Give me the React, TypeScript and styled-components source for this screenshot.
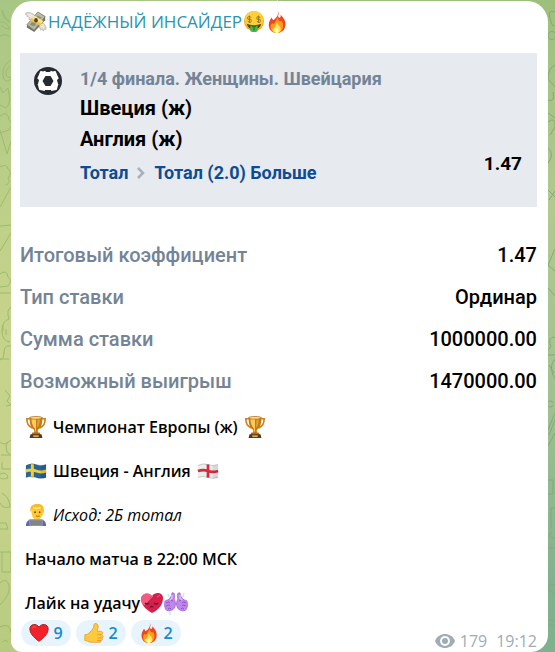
import React from "react";
import styled, { createGlobalStyle } from "styled-components";

const GlobalStyle = createGlobalStyle`
  *, *::before, *::after { box-sizing: border-box; }
  body { margin: 0; font-family: "Open Sans", "Noto Sans", sans-serif; font-size: 16px; line-height: 22px; color: #000; }
  p, h1, h2, dl, dd, dt { margin: 0; }
`;

const Wallpaper = styled.div`
  display: grid;
  grid-template-columns: 11px minmax(0, 1fr) 7px;
  min-height: 100vh;
  background:
    linear-gradient(#a7c684, #b5cc86 18%, #c5d38a 45%, #c8d38c 75%, #b6cb7f) left / 50% 100% no-repeat,
    linear-gradient(#9cc07b, #b2c98f 32%, #a0c290 60%, #80b18f 90%) right / 50% 100% no-repeat;
`;

const Gutter = styled.div`
  overflow: hidden;
  svg { display: block; fill: none; stroke-width: 1; }
`;

const Bubble = styled.article`
  margin-top: 1px;
  padding: 10px 11px 0 9px;
  background: #fff;
  border-radius: 21px 21px 17px 11px;
`;

const Header = styled.header`
  display: flex;
  align-items: center;
  gap: 1px;
  padding-left: 5px;
`;

const ChannelLink = styled.a`
  display: flex;
  align-items: center;
  gap: 1px;
  color: #2a94b2;
  font-size: 17px;
  text-decoration: none;
`;

const BetCard = styled.section`
  display: flex;
  gap: 18px;
  margin-top: 20px;
  padding: 14px 15px 22px 14px;
  background: #e7eaef;
  font-family: Roboto, sans-serif;
  font-size: 18px;
  font-weight: 700;
  svg { flex: none; }
`;

const BetInfo = styled.div`
  flex: 1;
  min-width: 0;
`;

const Tournament = styled.p`
  margin-bottom: 2px;
  line-height: 24px;
  color: #748496;
`;

const Team = styled.h2`
  font-size: 20px;
  line-height: 31px;
`;

const Market = styled.p`
  display: flex;
  align-items: center;
  gap: 9px;
  margin-top: 6px;
  line-height: 24px;
  color: #0d4c95;
`;

const Odds = styled.strong`
  align-self: flex-end;
  margin-bottom: 9px;
  font-size: 19px;
  font-weight: 700;
  line-height: 24px;
`;

const Summary = styled.dl`
  margin-top: 27px;
  font-family: Roboto, sans-serif;
  font-size: 20px;
  font-weight: 500;
`;

const SummaryRow = styled.div`
  display: flex;
  justify-content: space-between;
  line-height: 42px;
  dt { color: #748496; }
`;

const Message = styled.div`
  display: grid;
  gap: 22px;
  margin-top: 14px;
  padding-left: 5px;
`;

const Line = styled.p<{ $italic?: boolean; $gap?: number }>`
  display: flex;
  align-items: center;
  gap: ${(p) => p.$gap ?? 6}px;
  height: 22px;
  font-weight: ${(p) => (p.$italic ? 400 : 600)};
  font-style: ${(p) => (p.$italic ? "italic" : "normal")};
`;

const Footer = styled.footer`
  display: flex;
  justify-content: space-between;
  align-items: flex-start;
  margin-top: 6px;
  padding-left: 1px;
`;

const Reactions = styled.div`
  display: flex;
  gap: 5px;
`;

const Reaction = styled.button`
  display: flex;
  align-items: center;
  justify-content: center;
  gap: 4px;
  width: 50px;
  height: 26px;
  padding: 0;
  border: 0;
  border-radius: 13px;
  background: #e8f4fc;
  color: #168acd;
  font: 600 16px/22px "Open Sans", "Noto Sans", sans-serif;
  cursor: pointer;
`;

const Meta = styled.div`
  display: flex;
  align-items: center;
  gap: 5px;
  margin-top: 10px;
  color: #a0acb6;
  time { margin-left: 4px; }
`;

const Icon = ({ size = 22, label, children }: { size?: number; label?: string; children: React.ReactNode }) => (
  <svg width={size} height={size} viewBox="0 0 24 24" role={label ? "img" : undefined} aria-label={label} aria-hidden={label ? undefined : true}>
    {children}
  </svg>
);

const WingedMoney = () => (
  <Icon size={22}>
    <path d="M1 2c3-1 7 0 10 3l-3 5-4-1 1-2-3-1 1-1C1 5 0 4 1 2z" fill="#dcd9d0" stroke="#a8a598" strokeWidth=".6" />
    <path d="M23 18c-1-4-4-6-7-6l-3 4 3 2 1 3 2-1 1 2 1-2 2 0z" fill="#dcd9d0" stroke="#a8a598" strokeWidth=".6" />
    <path d="M2 16 14 2l8 4v4L10 23l-8-5z" fill="#727566" />
    <path d="M2 15 14 1l8 5L10 21z" fill="#b8baa4" stroke="#777a66" strokeWidth=".8" />
    <path d="m5 15 9-10 4 2-8 10z" fill="#8d907b" />
    <path d="m7 8 11 6v3L5 10z" fill="#f4c13f" />
    <path d="m7 8 3-3 10 6-2 3z" fill="#ffe083" />
    <ellipse cx="12" cy="10" rx="2" ry="2.5" fill="#49462c" />
    <path d="M3 5l5 2M3 3l7 3M16 16l5 2M17 14l4 2" stroke="#fff" strokeWidth=".8" />
  </Icon>
);

const MoneyFace = () => (
  <Icon size={22}>
    <circle cx="12" cy="11" r="11" fill="#f4ad1e" />
    <circle cx="12" cy="10" r="10" fill="#ffd039" />
    <path d="M4 14c4 2 12 2 16 0-1 4-4 6-8 6s-7-2-8-6z" fill="#6b3b10" />
    <path d="M8 16h8v6l-2 1h-4l-2-1z" fill="#4cb44c" />
    <path d="M10 17h4M12 18v3" stroke="#187c35" strokeWidth="1.4" />
    {[7, 17].map((x) => (
      <g key={x} transform={`translate(${x} 9)`} fill="none" stroke="#9a7118" strokeWidth="1">
        <path d="M2-2Q-2-4-2-1.500T0 0T2 2T-2 2M0-4V4" />
      </g>
    ))}
  </Icon>
);

const Fire = ({ size = 22 }: { size?: number }) => (
  <Icon size={size}>
    <path d="M13 0c2 4-1 5 1 7 2 1 2-1 2-3 4 4 6 8 5 13-1 4-4 7-9 7s-9-3-9-9c0-4 2-6 3-8 1 1 1 2 2 3 4-3 6-6 5-10z" fill="#ef4622" />
    <path d="M12 6c1 4 3 6 5 5 2 2 2 6 1 8-1 3-3 5-6 5-5 0-7-3-7-7 0-2 1-3 2-4 1 2 2 1 3-1 2-2 2-4 2-6z" fill="#ff9d19" />
    <path d="M12 12c0 3 4 4 4 8 0 3-2 4-4 4-3 0-5-2-5-5 1 1 2 0 3-2z" fill="#ffe65b" />
    <path d="M12 18c2 2 2 6 0 6s-3-2-2-4z" fill="#fffac0" />
  </Icon>
);

const Trophy = () => (
  <Icon size={22}>
    <path d="M7 3H2c0 6 2 8 6 10M17 3h5c0 6-2 8-6 10" fill="none" stroke="#c98320" strokeWidth="1.800" />
    <path d="M5 1h14c0 7-1 12-5 14v4h-4v-4C6 13 5 8 5 1z" fill="#c67c14" />
    <path d="M7 2h5v15h-1v-3C8 11 7 7 7 2z" fill="#ffcb5a" />
    <path d="M14 2h2c0 6-1 9-3 11z" fill="#e9a536" />
    <ellipse cx="12" cy="2" rx="7" ry="1.500" fill="#ffdc8a" stroke="#ad6b13" strokeWidth=".8" />
    <path d="m8 18h8l1 3H7z" fill="#b06a14" />
    <path d="M6 20h12l1 4H5z" fill="#5b3422" />
    <path d="M9 21h6v2H9z" fill="#d6a74e" />
  </Icon>
);

const Flag = ({ england = false }: { england?: boolean }) => (
  <Icon size={22}>
    <path d="M1 6q6-3 11-1t11 0v14q-6 2-11 0t-11 0z" fill={england ? "#eceded" : "#28659d"} />
    {england ? (
      <path d="M12 5v14M1 12q6-2 11 0t11 0" fill="none" stroke="#d72b3e" strokeWidth="3" />
    ) : (
      <path d="M8 4v15M1 12q6-2 11 0t11 0" fill="none" stroke="#f5cd36" strokeWidth="3.200" />
    )}
    <path d="M1 6q6-3 11-1t11 0M1 19q6-2 11 0t11 0" fill="none" stroke="#000" strokeOpacity=".2" />
    <path d="M17 6v14h6V5z" fill="#000" opacity=".09" />
  </Icon>
);

const Technologist = () => (
  <Icon size={22}>
    <path d="M1 24c0-5 3-7 7-7h9c4 0 6 3 6 7z" fill="#5f68b5" />
    <path d="M10 14h6v5h-6z" fill="#edae25" />
    <path d="M7 7c0-4 3-6 6-6s7 2 7 7c0 5-3 9-7 9s-6-4-6-10z" fill="#ffca32" />
    <path d="M6 9c-1-5 1-9 7-9 6-1 9 4 7 10l-2-4c-4 1-8 0-10-1z" fill="#f4bd2c" />
    <path d="M9 4c3 1 6 1 8 0" fill="none" stroke="#ffe076" strokeWidth="2" />
    <circle cx="11" cy="9" r="1" fill="#70451b" /><circle cx="16" cy="9" r="1" fill="#70451b" />
    <path d="M12 13q2 1 4 0" fill="none" stroke="#985817" />
    <path d="M4 17h16l-1 7H5z" fill="#92979d" />
    <path d="M5 18h14l-1 5H6z" fill="#80858c" />
  </Icon>
);

const MoodyHeart = () => (
  <Icon size={24}>
    <path d="M12 22C5 18 1 13 1 8c0-5 7-8 11-3 4-5 11-3 11 2 0 6-4 12-11 15z" fill="#d71f4c" />
    <path d="M1 8c0-6 8-8 11-3l-8 9C2 13 1 11 1 8z" fill="#ff769a" opacity=".7" />
    <path d="m4 14 9-9M17 6l3-2" stroke="#ee5f80" strokeWidth="1" />
    <path d="M5 12q2 2 4 0M14 12q2 2 4 0M10 16q2-1 3 0" stroke="#74122e" strokeWidth="1.500" fill="none" />
  </Icon>
);

const PurpleThumbs = () => (
  <Icon size={24}>
    <path d="m4 3 1 3M20 2l-1 4M6 21v3M1 17l3 1" stroke="#c4e8ff" strokeWidth="1.500" />
    {["", "translate(24 0) scale(-1 1)"].map((t) => (
      <g key={t} transform={t}>
        <path d="M8 2c3-1 3 3 2 6 3 4 1 10-2 11-4 2-7 0-7-3-1-2-1-3 0-4-1-2 1-3 3-3 2-2 4-4 4-7z" fill="#bf87ec" stroke="#9a60cb" strokeWidth=".8" />
        <path d="M2 12q3-2 4 0M2 15q3-2 4 0M4 18q2-2 3 0M7 9l2 1" stroke="#8f53c3" fill="none" />
        <path d="M8 4v3L6 9" stroke="#e6b8ff" fill="none" strokeWidth="1.500" />
      </g>
    ))}
  </Icon>
);

const RedHeart = () => (
  <Icon size={20}>
    <path d="M12 22C5 17 1 12 1 7c0-6 8-7 11-2 3-5 11-4 11 2 0 5-4 10-11 15z" fill="#f4212b" stroke="#a9262c" strokeWidth="1.200" />
    <path d="M4 6q2-3 4-1" stroke="#ff6860" fill="none" />
  </Icon>
);

const Thumb = () => (
  <Icon size={20}>
    <path d="M1 14c3 0 4-1 6-3 3-3 5-5 5-9 1-3 5-1 5 2 0 2-1 4-1 6h4c3 0 3 3 1 4 3 1 2 4 0 4 2 1 1 3-1 3 1 2 0 2-2 2H8c-3 0-4-2-7-2z" fill="#ffc93d" stroke="#e89c28" />
    <path d="M16 14h5M16 18h5M16 21h4" stroke="#e89c28" strokeWidth="1.200" />
  </Icon>
);

const SoccerBall = () => (
  <svg width="28" height="28" viewBox="0 0 28 28" aria-hidden="true">
    <circle cx="14" cy="14" r="14" fill="#262b31" />
    <path d="M7 5q2 1 4 0l2-1h2l2 1q2 1 4 0l2 5 2 4-2 4-1 4-5 1-2 1h-2l-2-1-5-1-1-4-2-4 2-4z" fill="#fff" stroke="#fff" strokeWidth="2" strokeLinejoin="round" />
    <path d="M11.500 9h5l3 5-3 5h-5l-3-5z" fill="#262b31" />
    <path d="M10 2h8l-2 3h-4zM2 10l3 3-1 4-2 1zM26 10l-3 3 1 4 2 1zM10 26l1-3h6l1 3z" fill="#262b31" />
  </svg>
);

const Chevron = () => (
  <svg width="8" height="12" viewBox="0 0 8 12" aria-hidden="true">
    <path d="m1 1 5 5-5 5" fill="none" stroke="#a9b0ba" strokeWidth="2.500" />
  </svg>
);

const Eye = () => (
  <svg width="20" height="14" viewBox="0 0 20 14" aria-label="Просмотры" role="img">
    <path d="M0 7C2 2 6 0 10 0s8 2 10 7c-2 5-6 7-10 7S2 12 0 7z" fill="#a0acb6" />
    <circle cx="10" cy="7" r="5" fill="#fff" /><circle cx="10" cy="7" r="3" fill="#a0acb6" />
  </svg>
);

const totals = [
  ["Итоговый коэффициент", "1.47"],
  ["Тип ставки", "Ординар"],
  ["Сумма ставки", "1000000.00"],
  ["Возможный выигрыш", "1470000.00"],
];

const reactions = [
  { name: "Сердце", icon: <RedHeart />, count: 9 },
  { name: "Нравится", icon: <Thumb />, count: 2 },
  { name: "Огонь", icon: <Fire size={20} />, count: 2 },
];

export default function App() {
  return (
    <>
      <GlobalStyle />
      <Wallpaper>
        <Gutter aria-hidden="true">
          <svg width="11" height="652" stroke="#9dbb6d">
            <path d="M2 10q2 8 8 12-7-2-8-12M0 22q6-1 10 7-4 1-9-4M0 36q6-3 10 1M11 60Q2 65 3 75t8 4M11 66q-6 3-5 8t5 3M0 87l3 6 5-5 1 6q2 9-3 14L0 105M0 116q8-6 9 4 5 4 0 10l-9 3M0 130l7 24 4-13M0 167q7-4 8 2 5 3 0 9 3 5-2 7M11 187 0 207M0 226l11-1M11 233 0 251M0 274q7-5 8 3 5 3 0 9l-8 1M0 293h11M11 307q-5 3-2 12-7 2-7 12t8 11M3 325v6M6 329v6M11 346q-7-1-7 6t-4 8M0 359h9M5 390l5 6-3 5 4 4-5 1M11 440q-7 3-4 12l4 3M0 442q4 4 8 0M1 455h10M2 462v7h9M0 474q7-3 8 4-5 2-8 0M2 493q8 5 8 14-7 2-10-4M0 523h6l2 6H0M0 552h11v20H2v-20M0 583q6-6 9 2 2 9-9 20M0 627q10-5 11 6M3 642l2-2 3 2" />
          </svg>
        </Gutter>
        <Bubble>
          <Header>
            <ChannelLink href="#channel"><WingedMoney />НАДЁЖНЫЙ ИНСАЙДЕР</ChannelLink>
            <MoneyFace />
            <Fire />
          </Header>
          <BetCard>
            <SoccerBall />
            <BetInfo>
              <Tournament>1/4 финала. Женщины. Швейцария</Tournament>
              <Team>Швеция (ж)</Team>
              <Team>Англия (ж)</Team>
              <Market><span>Тотал</span><Chevron /><span>Тотал (2.0) Больше</span></Market>
            </BetInfo>
            <Odds>1.47</Odds>
          </BetCard>
          <Summary>
            {totals.map(([name, value]) => (
              <SummaryRow key={name}><dt>{name}</dt><dd>{value}</dd></SummaryRow>
            ))}
          </Summary>
          <Message>
            <Line><Trophy /><span>Чемпионат Европы (ж)</span><Trophy /></Line>
            <Line><Flag /><span>Швеция - Англия</span><Flag england /></Line>
            <Line $italic><Technologist /><span>Исход: 2Б тотал</span></Line>
            <Line>Начало матча в 22:00 МСК</Line>
            <Line $gap={0}><span>Лайк на удачу</span><MoodyHeart /><PurpleThumbs /></Line>
          </Message>
          <Footer>
            <Reactions>
              {reactions.map(({ name, icon, count }) => (
                <Reaction key={name} type="button" aria-label={`${name}: ${count}`}>{icon}<span>{count}</span></Reaction>
              ))}
            </Reactions>
            <Meta><Eye /><span>179</span><time dateTime="19:12">19:12</time></Meta>
          </Footer>
        </Bubble>
        <Gutter aria-hidden="true">
          <svg width="7" height="652" stroke="#82aa78">
            <path d="M7 12q-8-3-5 7t5 6M7 38a4 4 0 1 1 0-5M7 65q-7 3-7 14l7 8M0 100q7 3 5-8M0 113l7 5M0 122q8-6 7 5l-5 8M0 148q7 6 0 15M0 190l7 7M1 200l6-9M7 249l-7 16 7 6M0 288l7 8M7 337q-8 0-4 10-5 3-3 8h7M7 359q-6 6-2 16l2 4M1 365l5 8M5 403a3 3 0 1 0 0 2M0 430l7-17M1 435l6-15M0 446l7-13M0 480h5v14H0M7 508H3v20M4 532a3 3 0 1 0 3 5M0 548h7M7 585q-6-3-7 5l7 4M0 620l7 1M0 625l7 1" />
          </svg>
        </Gutter>
      </Wallpaper>
    </>
  );
}
